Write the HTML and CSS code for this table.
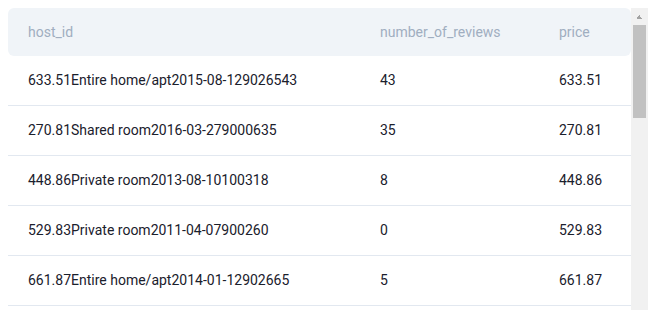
FILE: index.html
```html
<!DOCTYPE html>
<html lang="en">
<head>
  <meta charset="UTF-8">
  <title>Listings</title>
  <link rel="stylesheet" href="styles.css">
</head>
<body>

  <div class="panel">
    <div class="table-wrap">
      <table class="data-table">
        <colgroup>
          <col class="col-host">
          <col class="col-reviews">
          <col class="col-price">
        </colgroup>
        <thead>
          <tr>
            <th>host_id</th>
            <th>number_of_reviews</th>
            <th>price</th>
          </tr>
        </thead>
        <tbody>
          <tr>
            <td>633.51Entire home/apt2015-08-129026543</td>
            <td>43</td>
            <td>633.51</td>
          </tr>
          <tr>
            <td>270.81Shared room2016-03-279000635</td>
            <td>35</td>
            <td>270.81</td>
          </tr>
          <tr>
            <td>448.86Private room2013-08-10100318</td>
            <td>8</td>
            <td>448.86</td>
          </tr>
          <tr>
            <td>529.83Private room2011-04-07900260</td>
            <td>0</td>
            <td>529.83</td>
          </tr>
          <tr>
            <td>661.87Entire home/apt2014-01-12902665</td>
            <td>5</td>
            <td>661.87</td>
          </tr>
        </tbody>
      </table>
    </div>

    <div class="scrollbar">
      <div class="scroll-arrow"></div>
      <div class="scroll-thumb"></div>
    </div>
  </div>

</body>
</html>
```

FILE: styles.css
```css
body {
  font-family: Roboto, "Liberation Sans", sans-serif;
  margin: 8px 8px 0;
  background: #ffffff;
  color: #1a202c;
}

.panel {
  display: flex;
  width: 640px;
  height: 302px;
}

.table-wrap {
  flex: 1;
  overflow: hidden;
}

/* drawn scrollbar, same look as the classic chrome one */
.scrollbar {
  width: 17px;
  background: #f1f1f1;
  display: flex;
  flex-direction: column;
}

.scroll-arrow {
  height: 17px;
  background:
    linear-gradient(to top left, #a3a3a3 50%, transparent 50%) no-repeat 5px 7px / 4px 4px,
    linear-gradient(to top right, #a3a3a3 50%, transparent 50%) no-repeat 8px 7px / 4px 4px;
}

.scroll-thumb {
  height: 93px;
  margin: 0 2px;
  background: #c1c1c1;
}

.data-table {
  width: 100%;
  table-layout: fixed;
  border-collapse: separate;
  border-spacing: 0;
  font-size: 14px;
}

.col-host {
  width: 352px;
}

.col-reviews {
  width: 179px;
}

.data-table th {
  background: #f0f4f8;
  color: #a0aec0;
  font-weight: 400;
  text-align: left;
  line-height: 16px;
  padding: 16px 20px;
}

.data-table th:first-child {
  border-radius: 6px 0 0 6px;
}

.data-table th:last-child {
  border-radius: 0 6px 6px 0;
}

.data-table td {
  line-height: 17px;
  padding: 16px 20px;
  border-bottom: 1px solid #e2e8f0;
  white-space: nowrap;
}
```
